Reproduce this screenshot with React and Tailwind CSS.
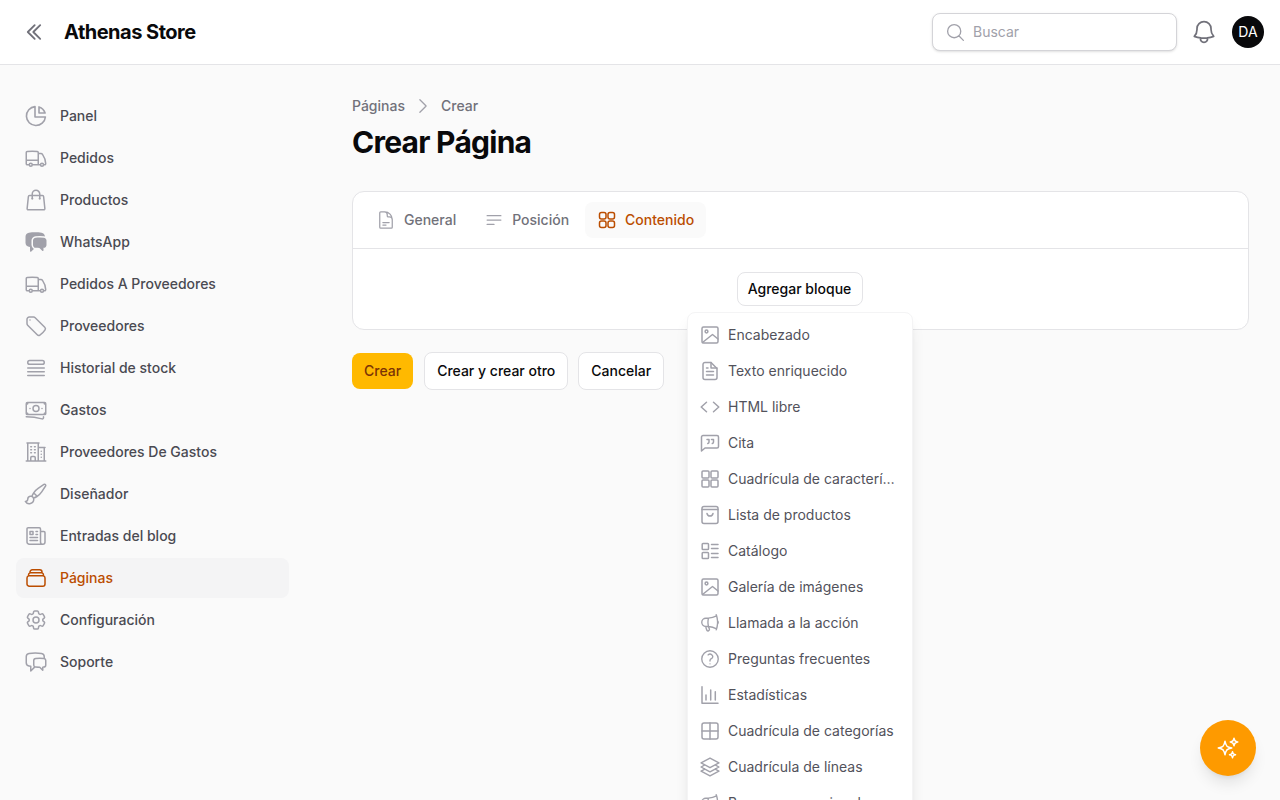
import React from 'react';
import {
  HiOutlineTruck,
  HiOutlineShoppingBag,
  HiChatBubbleLeftRight,
  HiOutlineTag,
  HiOutlineQueueList,
  HiOutlineBanknotes,
  HiOutlineBuildingOffice2,
  HiOutlinePaintBrush,
  HiOutlineNewspaper,
  HiOutlineRectangleStack,
  HiOutlineCog6Tooth,
  HiOutlineChatBubbleLeftRight,
  HiOutlineDocumentText,
  HiOutlineBars3BottomLeft,
  HiOutlineMegaphone,
  HiOutlineQuestionMarkCircle,
  HiOutlineSquare3Stack3D,
  HiOutlineChevronDoubleLeft,
  HiOutlineChevronRight,
  HiOutlineMagnifyingGlass,
  HiOutlineBell,
  HiOutlineSparkles,
} from 'react-icons/hi2';

// small hand drawn icons, 20x20 grid
const Icon20 = ({ children, ...props }) => (
  <svg viewBox="0 0 20 20" fill="none" stroke="currentColor" strokeWidth="1.5" strokeLinecap="round" strokeLinejoin="round" {...props}>
    {children}
  </svg>
);

const IconPie = (props) => (
  <svg viewBox="0 0 24 24" fill="none" stroke="currentColor" strokeWidth="1.6" strokeLinecap="round" strokeLinejoin="round" {...props}>
    <path d="M11 2.6A9.5 9.5 0 1 0 21.4 13H11z" />
    <path d="M15 2.9A9.5 9.5 0 0 1 21.1 9H15z" />
  </svg>
);

const IconPhoto = (props) => (
  <Icon20 {...props}>
    <rect x="2" y="2" width="16" height="16" rx="1.5" />
    <circle cx="6.5" cy="6.5" r="1.4" />
    <path d="M2.5 17.5l10-8 5.5 4.5" />
  </Icon20>
);

const IconDoc = (props) => (
  <Icon20 {...props}>
    <path d="M3 3.5a2 2 0 0 1 2-2h6l6 6v9a2 2 0 0 1-2 2H5a2 2 0 0 1-2-2z" />
    <path d="M11 1.5V7h6M6.5 7h1.5M6.5 10.5h7M6.5 14h7" />
  </Icon20>
);

const IconCode = (props) => (
  <Icon20 {...props}>
    <path d="M6.5 5.2L1.2 10l5.3 4.8M13.5 5.2l5.3 4.8-5.3 4.8" />
  </Icon20>
);

const IconQuote = (props) => (
  <Icon20 {...props}>
    <path d="M1.5 4A1.5 1.5 0 0 1 3 2.5h14A1.5 1.5 0 0 1 18.5 4v9.5A1.5 1.5 0 0 1 17 15H5l-3.5 3z" />
    <path d="M7 6.5h2V9c0 .8-.5 1.3-1.2 1.5M11.5 6.5h2V9c0 .8-.5 1.3-1.2 1.5" />
  </Icon20>
);

const IconGrid = (props) => (
  <Icon20 {...props}>
    <rect x="2" y="2" width="7" height="7" rx="1" />
    <rect x="11" y="2" width="7" height="7" rx="1" />
    <rect x="2" y="11" width="7" height="7" rx="1" />
    <rect x="11" y="11" width="7" height="7" rx="1" />
  </Icon20>
);

const IconGridRound = (props) => (
  <Icon20 {...props}>
    <rect x="2.5" y="2.5" width="6.5" height="6.5" rx="2" />
    <rect x="11" y="2.5" width="6.5" height="6.5" rx="2" />
    <rect x="2.5" y="11" width="6.5" height="6.5" rx="2" />
    <rect x="11" y="11" width="6.5" height="6.5" rx="2" />
  </Icon20>
);

const IconBagBox = (props) => (
  <Icon20 {...props}>
    <rect x="2" y="1.5" width="16" height="17" rx="2" />
    <path d="M2 4.5h16M7 8.5c.4 1.8 1.5 2.5 3 2.5s2.6-.7 3-2.5" />
  </Icon20>
);

const IconCatalog = (props) => (
  <Icon20 {...props}>
    <rect x="2.2" y="2.5" width="6.3" height="6" rx="0.8" />
    <rect x="2.2" y="11.5" width="6.3" height="6" rx="0.8" />
    <path d="M11.5 3.5H18M11.5 7.5H18M11.5 12.5H18M11.5 16.5H18" />
  </Icon20>
);

const IconStats = (props) => (
  <Icon20 {...props}>
    <path d="M2 1.7v16.6h16M6 15v-5M10.7 15V5M15.3 15V6.7" />
  </Icon20>
);

const IconCategories = (props) => (
  <Icon20 {...props}>
    <rect x="2" y="2" width="16" height="16" rx="2" />
    <path d="M10 2v16M2 10h16" />
  </Icon20>
);

const navItems = [
  { label: 'Panel', icon: IconPie },
  { label: 'Pedidos', icon: HiOutlineTruck },
  { label: 'Productos', icon: HiOutlineShoppingBag },
  { label: 'WhatsApp', icon: HiChatBubbleLeftRight },
  { label: 'Pedidos A Proveedores', icon: HiOutlineTruck },
  { label: 'Proveedores', icon: HiOutlineTag },
  { label: 'Historial de stock', icon: HiOutlineQueueList },
  { label: 'Gastos', icon: HiOutlineBanknotes },
  { label: 'Proveedores De Gastos', icon: HiOutlineBuildingOffice2 },
  { label: 'Diseñador', icon: HiOutlinePaintBrush },
  { label: 'Entradas del blog', icon: HiOutlineNewspaper },
  { label: 'Páginas', icon: HiOutlineRectangleStack, active: true },
  { label: 'Configuración', icon: HiOutlineCog6Tooth },
  { label: 'Soporte', icon: HiOutlineChatBubbleLeftRight },
];

const iconSize = 'w-5 h-5';
const iconSizeBig = 'w-[22px] h-[22px] -mx-px';

const blockItems = [
  { label: 'Encabezado', icon: IconPhoto, size: iconSize },
  { label: 'Texto enriquecido', icon: IconDoc, size: iconSize },
  { label: 'HTML libre', icon: IconCode, size: iconSize },
  { label: 'Cita', icon: IconQuote, size: iconSize },
  { label: 'Cuadrícula de características', icon: IconGrid, size: iconSize },
  { label: 'Lista de productos', icon: IconBagBox, size: iconSize },
  { label: 'Catálogo', icon: IconCatalog, size: iconSize },
  { label: 'Galería de imágenes', icon: IconPhoto, size: iconSize },
  { label: 'Llamada a la acción', icon: HiOutlineMegaphone, size: iconSizeBig },
  { label: 'Preguntas frecuentes', icon: HiOutlineQuestionMarkCircle, size: iconSizeBig },
  { label: 'Estadísticas', icon: IconStats, size: iconSize },
  { label: 'Cuadrícula de categorías', icon: IconCategories, size: iconSize },
  { label: 'Cuadrícula de líneas', icon: HiOutlineSquare3Stack3D, size: iconSizeBig },
  { label: 'Banner promocional', icon: HiOutlineMegaphone, size: iconSizeBig },
];

const App = () => {
  return (
    <div className="h-screen overflow-hidden bg-[#fafafa] font-['Inter',sans-serif] text-sm text-[#4a4a52]">
      {/* Header */}
      <header className="h-[65px] bg-white border-b border-[#e4e4e7] flex items-center pl-[23px] pr-4">
        <HiOutlineChevronDoubleLeft strokeWidth={2} className="w-[22px] h-[22px] text-[#71717a]" />
        <h1 className="ml-[19px] text-xl font-bold tracking-tight text-[#09090b]">Athenas Store</h1>
        <div className="ml-auto flex items-center">
          <div className="w-[245px] h-[38px] flex items-center gap-[7px] px-3 bg-white border border-[#d4d4d8] rounded-lg shadow-sm">
            <HiOutlineMagnifyingGlass className="w-[21px] h-[21px] text-[#a1a1aa]" />
            <span className="text-[#a1a1aa]">Buscar</span>
          </div>
          <HiOutlineBell className="ml-[13px] w-7 h-7 text-[#71717a]" />
          <div className="ml-[14px] w-8 h-8 rounded-full bg-[#09090b] text-white flex items-center justify-center text-sm">DA</div>
        </div>
      </header>

      <div className="flex">
        {/* Sidebar */}
        <aside className="w-[320px] shrink-0 pt-[31px] pl-4 pr-[31px]">
          <ul className="flex flex-col gap-0.5">
            {navItems.map(({ label, icon: Icon, active }) => (
              <li
                key={label}
                className={`h-10 flex items-center gap-3 px-2 rounded-lg font-medium ${active ? 'bg-[#f4f4f5] text-[#bb4d00]' : ''}`}
              >
                <Icon className={`w-6 h-6 shrink-0 ${active ? 'text-[#bb4d00]' : 'text-[#a1a1aa]'}`} />
                <span>{label}</span>
              </li>
            ))}
          </ul>
        </aside>

        {/* Main */}
        <main className="flex-1 pl-8 pr-[31px] pt-[31px]">
          <nav className="flex items-center h-5 font-medium text-[#71717a]">
            <span>Páginas</span>
            <HiOutlineChevronRight className="mx-2 w-5 h-5 text-[#a1a1aa]" />
            <span>Crear</span>
          </nav>
          <h2 className="mt-2 text-[30px] leading-9 font-bold tracking-tight text-[#09090b]">Crear Página</h2>

          <section className="relative mt-[31px] bg-white border border-[#e4e4e7] rounded-xl">
            <div className="h-[57px] flex items-center gap-1 px-[11px] border-b border-[#e4e4e7]">
              <div className="h-9 flex items-center gap-2 px-3 font-medium text-[#71717a]">
                <HiOutlineDocumentText className="w-5 h-5 text-[#a1a1aa]" />
                General
              </div>
              <div className="h-9 flex items-center gap-2 px-3 font-medium text-[#71717a]">
                <HiOutlineBars3BottomLeft className="w-5 h-5 text-[#a1a1aa]" />
                Posición
              </div>
              <div className="h-9 flex items-center gap-2 px-3 rounded-lg bg-[#fafafa] font-medium text-[#bb4d00]">
                <IconGridRound className="w-5 h-5" />
                Contenido
              </div>
            </div>
            <div className="h-[80px] flex items-center justify-center">
              <button className="h-[34px] w-[126px] mr-[2px] bg-white border border-[#e4e4e7] rounded-lg font-medium text-[#09090b]">
                Agregar bloque
              </button>
            </div>

            {/* Block dropdown */}
            <div className="absolute left-[334px] top-[120px] z-10 w-[226px] py-1 bg-white rounded-lg border border-[#f4f4f5] shadow-lg">
              {blockItems.map(({ label, icon: Icon, size }) => (
                <div key={label} className="h-9 flex items-center gap-2 px-3 text-[#52525b]">
                  <Icon className={`${size} shrink-0 text-[#a1a1aa]`} />
                  <span className="truncate">{label}</span>
                </div>
              ))}
            </div>
          </section>

          <div className="mt-[22px] flex items-start gap-[10px]">
            <button className="mt-px mr-px h-9 px-3 rounded-lg bg-[#ffb900] font-medium text-[#7b3306]">Crear</button>
            <button className="h-[38px] px-3 bg-white border border-[#e4e4e7] rounded-lg font-medium text-[#09090b]">Crear y crear otro</button>
            <button className="h-[38px] px-3 bg-white border border-[#e4e4e7] rounded-lg font-medium text-[#09090b]">Cancelar</button>
          </div>
        </main>
      </div>

      {/* Floating AI button */}
      <button className="fixed right-6 bottom-6 z-20 w-14 h-14 rounded-full bg-[#fe9a00] shadow-lg flex items-center justify-center">
        <HiOutlineSparkles className="w-6 h-6 text-white" />
      </button>
    </div>
  );
};

export default App;
